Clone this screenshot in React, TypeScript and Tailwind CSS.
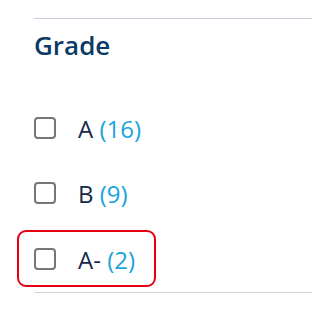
import React from "react";

const items = [
  { label: "A", count: 16, highlight: false },
  { label: "B", count: 9, highlight: false },
  { label: "A-", count: 2, highlight: true },
];

export default function App() {
  return (
    <div
      className="w-[328px] h-[314px] bg-white overflow-hidden pl-[34px] pr-[16px] pt-[18px]"
      style={{ fontFamily: '"Open Sans", "Noto Sans", sans-serif' }}
    >
      <div className="h-px bg-[#c5cedd]" />
      <h2 className="mt-[9px] mb-[33px] text-[26px] leading-[34px] font-semibold text-[#0b3a66]">
        Grade
      </h2>
      <div className="flex flex-col">
        {items.map((it) => (
          <div key={it.label} className="relative flex items-center h-[65.5px]">
            {it.highlight && (
              <div className="absolute left-[-17px] top-[3.5px] w-[139px] h-[57px] border-2 border-[#e60012] rounded-[9px]" />
            )}
            <span className="w-[22px] h-[22px] border-2 border-[#767676] rounded-[4px] shrink-0" />
            <span className="ml-[22px] text-[24px] leading-[32px] text-[#16294a] translate-y-[1px]">
              {it.label} <span className="text-[#1aa3dc]">({it.count})</span>
            </span>
          </div>
        ))}
      </div>
      <div className="h-px bg-[#cfd6df]" />
    </div>
  );
}
